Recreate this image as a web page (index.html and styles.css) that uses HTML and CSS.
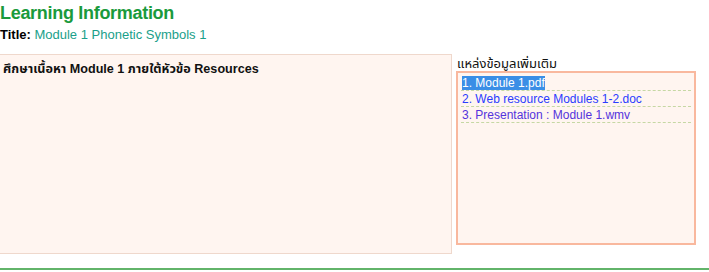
FILE: index.html
```html
<!DOCTYPE html>
<html lang="th">
<head>
  <meta charset="UTF-8" />
  <title>Learning Information</title>
  <link rel="stylesheet" href="styles.css">
</head>
<body>
  <div class="page">
    <h1 class="heading">Learning Information</h1>
    <div class="title-row"><span class="title-label">Title:</span> <span class="title-value">Module 1 Phonetic Symbols 1</span></div>
    <div class="content">
      <div class="main-box">
        <p class="main-text">ศึกษาเนื้อหา Module 1 ภายใต้หัวข้อ Resources</p>
      </div>
      <div class="side">
        <div class="side-label">แหล่งข้อมูลเพิ่มเติม</div>
        <div class="side-box">
          <div class="res-item"><a href="#" class="res-link selected">1. Module 1.pdf</a></div>
          <div class="res-item"><a href="#" class="res-link">2. Web resource Modules 1-2.doc</a></div>
          <div class="res-item"><a href="#" class="res-link visited">3. Presentation : Module 1.wmv</a></div>
        </div>
      </div>
    </div>
    <div class="footer-line"></div>
  </div>
</body>
</html>
```

FILE: styles.css
```css
body {
  margin: 0;
  background-color: white;
  font-family: Tahoma, "DejaVu Sans", "Noto Sans", sans-serif;
}
.page {
  width: 709px;
}
.heading {
  margin: 0;
  padding-top: 2px;
  font-family: "Liberation Sans", Arial, sans-serif;
  font-size: 18px;
  letter-spacing: -0.3px;
  font-weight: bold;
  color: #1a9a3c;
  line-height: 22px;
}
.title-row {
  font-family: "Liberation Sans", Arial, sans-serif;
  font-size: 13px;
  line-height: 21px;
  height: 30px;
}
.title-label {
  color: black;
  font-weight: bold;
}
.title-value {
  color: #1aa08a;
}
.content {
  display: flex;
  align-items: flex-start;
  gap: 4px;
}
.main-box {
  width: 451px;
  height: 198px;
  background-color: #fff5f0;
  border: 1px solid #efd8cc;
  border-left: none;
}
.main-text {
  margin: 5px 0 0 3px;
  font-family: "Liberation Sans", Arial, "Noto Sans Thai", sans-serif;
  font-size: 12.6px;
  font-weight: bold;
  color: #111;
}
.side {
  display: flex;
  flex-direction: column;
  width: 240px;
  padding-top: 2px;
}
.side-label {
  font-family: "Liberation Sans", Arial, "Noto Sans Thai", sans-serif;
  font-size: 13px;
  color: #111;
  height: 15px;
  line-height: 15px;
  padding-left: 1px;
}
.side-box {
  height: 168px;
  background-color: #fff5f0;
  border: 2px solid #f9b89e;
  padding: 2px 3px 0 3px;
}
.res-item {
  border-bottom: 1px dashed #c6d8a4;
  height: 14px;
  line-height: 14px;
  padding: 0 0 1px 1px;
}
.res-link {
  font-family: "Liberation Sans", Arial, sans-serif;
  font-size: 12px;
  color: #2a3cff;
  text-decoration: none;
}
.res-link.selected {
  background-color: #3a8ee6;
  color: white;
}
.res-link.visited {
  color: #5533dd;
}
.footer-line {
  margin-top: 14px;
  border-top: 2px solid #62b46a;
}
```
